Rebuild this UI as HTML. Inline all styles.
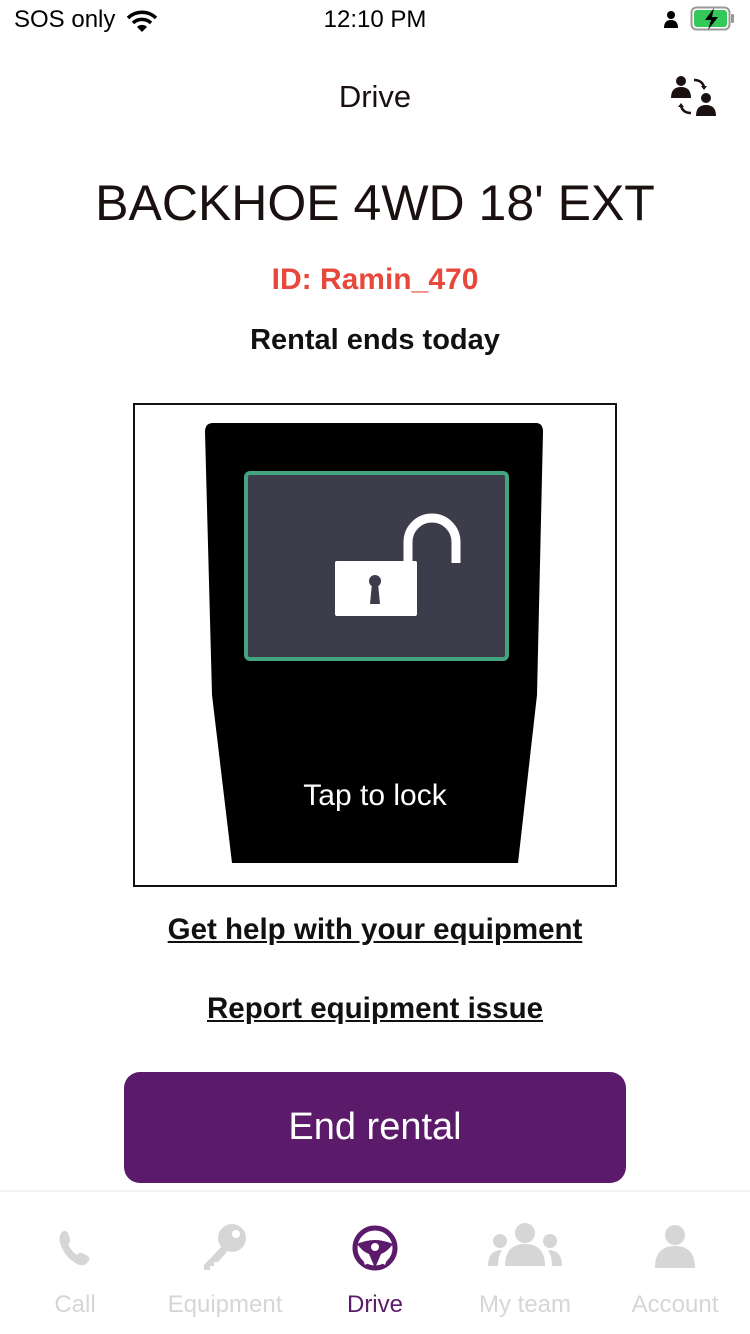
<!DOCTYPE html>
<html><head><meta charset="utf-8"><style>
*{margin:0;padding:0;box-sizing:border-box}
body{width:750px;height:1334px;background:#fff;font-family:"Liberation Sans",sans-serif;position:relative;overflow:hidden;color:#1a1010}
.a{position:absolute}
.c{position:absolute;left:0;width:750px;text-align:center}
</style></head><body>
<div class="a" style="left:14px;top:6px;font-size:24px;color:#000">SOS only</div>
<svg class="a" style="left:126px;top:9px" width="32" height="24" viewBox="0 0 32 24"><path d="M2 9a20 20 0 0 1 28 0" stroke="#000" stroke-width="3.5" fill="none"/><path d="M7 14a13 13 0 0 1 18 0" stroke="#000" stroke-width="3.5" fill="none"/><path d="M16 23l-5-5a7 7 0 0 1 10 0z" fill="#000"/></svg>
<div class="c" style="top:6px;font-size:24px;color:#000">12:10 PM</div>
<svg class="a" style="left:663px;top:10px" width="16" height="18" viewBox="0 0 16 18"><circle cx="8" cy="5" r="4" fill="#000"/><path d="M1 18q0-8 7-8t7 8z" fill="#000"/></svg>
<svg class="a" style="left:690px;top:6px" width="46" height="26" viewBox="0 0 46 26"><rect x="1.5" y="1.5" width="38" height="22" rx="5" fill="none" stroke="#999" stroke-width="2"/><rect x="4" y="4" width="33" height="17" rx="3" fill="#34c759"/><rect x="41" y="8" width="3" height="9" rx="1" fill="#999"/><path d="M24 2l-9 12h6l-3 10 10-13h-6z" fill="#000"/></svg>
<div class="c" style="top:79px;font-size:31px;color:#1a1010">Drive</div>
<svg class="a" style="left:668px;top:72px" width="52" height="48" viewBox="0 0 52 48"><circle cx="13" cy="9" r="5" fill="#1a1010"/><path d="M3 26q0-11 10-11t10 11z" fill="#1a1010"/><circle cx="38" cy="26" r="5" fill="#1a1010"/><path d="M28 44q0-11 10-11t10 11z" fill="#1a1010"/><path d="M26 8q8 0 10 7" stroke="#1a1010" stroke-width="2.5" fill="none"/><path d="M33 14l3 4 3-4z" fill="#1a1010"/><path d="M23 41q-8 0-10-7" stroke="#1a1010" stroke-width="2.5" fill="none"/><path d="M10 35l3-4 3 4z" fill="#1a1010"/></svg>
<div class="c" style="top:174px;font-size:50px;color:#1a1010">BACKHOE 4WD 18' EXT</div>
<div class="c" style="top:263px;font-size:30px;font-weight:bold;color:#e8483b">ID: Ramin_470</div>
<div class="c" style="top:324px;font-size:29px;font-weight:bold;color:#111">Rental ends today</div>
<div class="a" style="left:133px;top:403px;width:484px;height:484px;border:2px solid #111"></div>
<svg class="a" style="left:134px;top:404px" width="482" height="482" viewBox="134 404 482 482">
<path d="M213 423H536Q543 423 543 432L537 695L518 863H232L212 695L205 432Q205 423 213 423Z" fill="#000"/>
<rect x="246" y="473" width="261" height="186" rx="4" fill="#3d3c4a" stroke="#43a47f" stroke-width="4"/>
<rect x="335" y="561" width="82" height="55" rx="2" fill="#fff"/>
<path d="M408 566V542a24 24 0 0 1 48 0V563" stroke="#fff" stroke-width="9" fill="none"/>
<circle cx="375" cy="581" r="6" fill="#3d3c4a"/><path d="M372 583h6l2 21h-10z" fill="#3d3c4a"/>
</svg>
<div class="c" style="top:779px;font-size:30px;color:#fff">Tap to lock</div>
<div class="c" style="top:913px;font-size:29.5px;font-weight:bold;text-decoration:underline;color:#111">Get help with your equipment</div>
<div class="c" style="top:992px;font-size:29.5px;font-weight:bold;text-decoration:underline;color:#111">Report equipment issue</div>
<div class="a" style="left:124px;top:1072px;width:502px;height:111px;border-radius:16px;background:#5c1a6b;color:#fff;font-size:38px;text-align:center;line-height:111px">End rental</div>
<div class="a" style="left:0;top:1190px;width:750px;height:2px;background:#f2f2f2"></div>
<svg class="a" style="left:55px;top:1228px" width="40" height="40" viewBox="0 0 40 40"><path d="M6 5q4-4 7 0l2 6q1 3-2 5q3 7 9 11q2-3 5-2l6 3q3 3-1 7q-4 4-10 1q-11-6-16-18q-3-8 0-13z" fill="#d6d6d6"/></svg>
<svg class="a" style="left:200px;top:1222px" width="50" height="50" viewBox="0 0 50 50"><circle cx="32" cy="16" r="14" fill="#d6d6d6"/><path d="M22 24L4 43v5h6v-4h4v-4h4l9-10z" fill="#d6d6d6"/><circle cx="36" cy="12" r="4" fill="#fff"/></svg>
<svg class="a" style="left:351px;top:1224px" width="48" height="48" viewBox="0 0 48 48"><circle cx="24" cy="24" r="20" fill="none" stroke="#5c1a6b" stroke-width="5"/><path d="M6 20q18-8 36 0q-6 8-12 10l-6 14l-6-14q-6-2-12-10z" fill="#5c1a6b"/><circle cx="24" cy="23" r="4" fill="#fff"/><path d="M10 30q5 2 9 8l-5 3zM38 30q-5 2-9 8l5 3z" fill="#fff"/></svg>
<svg class="a" style="left:487px;top:1222px" width="76" height="46" viewBox="0 0 76 46"><circle cx="38" cy="11" r="10" fill="#d6d6d6"/><path d="M18 44q0-22 20-22t20 22z" fill="#d6d6d6"/><circle cx="13" cy="19" r="7" fill="#d6d6d6"/><path d="M1 44q0-16 14-16q-4 6-4 16z" fill="#d6d6d6"/><circle cx="63" cy="19" r="7" fill="#d6d6d6"/><path d="M75 44q0-16-14-16q4 6 4 16z" fill="#d6d6d6"/></svg>
<svg class="a" style="left:654px;top:1224px" width="42" height="44" viewBox="0 0 42 44"><circle cx="21" cy="11" r="10" fill="#d6d6d6"/><path d="M1 44q0-22 20-22t20 22z" fill="#d6d6d6"/></svg>
<div class="a" style="left:0;top:1291px;width:150px;text-align:center;font-size:24px;color:#d6d6d6">Call</div>
<div class="a" style="left:150px;top:1291px;width:150px;text-align:center;font-size:24px;color:#d6d6d6">Equipment</div>
<div class="a" style="left:300px;top:1291px;width:150px;text-align:center;font-size:24px;color:#5c1a6b">Drive</div>
<div class="a" style="left:450px;top:1291px;width:150px;text-align:center;font-size:24px;color:#d6d6d6">My team</div>
<div class="a" style="left:600px;top:1291px;width:150px;text-align:center;font-size:24px;color:#d6d6d6">Account</div>
</body></html>
